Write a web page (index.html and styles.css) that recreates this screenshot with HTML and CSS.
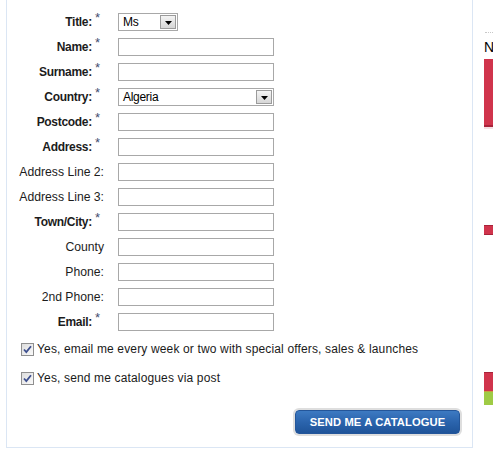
FILE: index.html
```html
<!DOCTYPE html>
<html>
<head>
<meta charset="utf-8">
<link rel="stylesheet" href="styles.css">
</head>
<body>
<div class="page">
  <div class="panel">
    <div class="form">
      <div class="label bold">Title:<span class="req">*</span></div>
      <div class="select small"><span class="val">Ms</span><span class="arrow"><svg width="7" height="4" viewBox="0 0 7 4"><path d="M0 0H7L3.5 4Z" fill="#000"/></svg></span></div>

      <div class="label bold">Name:<span class="req">*</span></div>
      <div class="input"></div>

      <div class="label bold">Surname:<span class="req">*</span></div>
      <div class="input"></div>

      <div class="label bold">Country:<span class="req">*</span></div>
      <div class="select"><span class="val">Algeria</span><span class="arrow"><svg width="7" height="4" viewBox="0 0 7 4"><path d="M0 0H7L3.5 4Z" fill="#000"/></svg></span></div>

      <div class="label bold">Postcode:<span class="req">*</span></div>
      <div class="input"></div>

      <div class="label bold">Address:<span class="req">*</span></div>
      <div class="input"></div>

      <div class="label">Address Line 2:</div>
      <div class="input"></div>

      <div class="label">Address Line 3:</div>
      <div class="input"></div>

      <div class="label bold">Town/City:<span class="req">*</span></div>
      <div class="input"></div>

      <div class="label">County</div>
      <div class="input"></div>

      <div class="label">Phone:</div>
      <div class="input"></div>

      <div class="label">2nd Phone:</div>
      <div class="input"></div>

      <div class="label bold">Email:<span class="req">*</span></div>
      <div class="input"></div>
    </div>

    <div class="checks">
      <div class="check"><span class="box"><svg width="13" height="13" viewBox="0 0 13 13"><defs><linearGradient id="g1" x1="0" y1="0" x2="1" y2="1"><stop offset="0" stop-color="#dcdcdc"/><stop offset="1" stop-color="#fbfbfb"/></linearGradient></defs><rect x="0.5" y="0.5" width="12" height="12" fill="url(#g1)" stroke="#8f8f8f"/><path d="M3 6.5L5.3 9L10 3.2" fill="none" stroke="#3d4f8e" stroke-width="1.8"/></svg></span>Yes, email me every week or two with special offers, sales &amp; launches</div>
      <div class="check"><span class="box"><svg width="13" height="13" viewBox="0 0 13 13"><rect x="0.5" y="0.5" width="12" height="12" fill="url(#g1)" stroke="#8f8f8f"/><path d="M3 6.5L5.3 9L10 3.2" fill="none" stroke="#3d4f8e" stroke-width="1.8"/></svg></span>Yes, send me catalogues via post</div>
    </div>

    <div class="actions">
      <button class="btn">SEND ME A CATALOGUE</button>
    </div>
  </div>

  <div class="side">
    <div class="dots"></div>
    <div class="side-title">N</div>
    <div class="bar bar-big"></div>
    <div class="bar bar-small"></div>
    <div class="bar bar-red"></div>
    <div class="bar bar-green"></div>
  </div>
</div>
</body>
</html>
```
FILE: styles.css
```css
* { box-sizing: border-box; }
html, body { margin: 0; padding: 0; background: #fff; }
body {
  font-family: "Liberation Sans", Arial, sans-serif;
  font-size: 12px;
  color: #1a1a1a;
  overflow: hidden;
}
.page {
  display: flex;
  align-items: flex-start;
  padding-left: 6px;
}
.panel {
  width: 467px;
  height: 448px;
  border: 1px solid #dbe6f4;
  border-top: none;
  padding-top: 13px;
  flex: none;
}
.form {
  display: grid;
  grid-template-columns: 97px 156px;
  column-gap: 14px;
  row-gap: 7px;
  grid-auto-rows: 18px;
}
.label {
  text-align: right;
  line-height: 18px;
  white-space: nowrap;
  color: #1c1c1c;
  font-size: 12.2px;
}
.label.bold {
  font-weight: bold;
  font-size: 12px;
  letter-spacing: -0.3px;
  padding-right: 4px;
}
.req {
  font-weight: normal;
  color: #3f4d70;
  font-size: 13px;
  position: relative;
  top: -4px;
  margin-left: 3px;
  letter-spacing: 0;
}
.input {
  border: 1px solid #a8a8a8;
  background: #fff;
  height: 18px;
}
.select {
  border: 1px solid #a8a8a8;
  background: #fff;
  height: 18px;
  display: flex;
  align-items: center;
  justify-content: space-between;
  padding: 0 1px 0 4px;
}
.select.small { width: 60px; }
.val {
  font-size: 12px;
  letter-spacing: -0.3px;
  color: #000;
}
.arrow {
  width: 16px;
  height: 14px;
  border: 1px solid #9b9b9b;
  background: linear-gradient(#f4f4f4, #d6d6d6);
  display: flex;
  align-items: center;
  justify-content: center;
  padding-top: 2px;
}
.arrow svg { display: block; }
.checks {
  margin-top: 10px;
  padding-left: 14px;
  display: flex;
  flex-direction: column;
  gap: 13px;
}
.check {
  display: flex;
  align-items: center;
  font-size: 12px;
  letter-spacing: 0.15px;
  line-height: 16px;
  color: #1a1a1a;
  white-space: nowrap;
}
.box {
  width: 13px;
  height: 13px;
  margin-right: 3px;
  flex: none;
}
.box svg { display: block; }
.actions {
  display: flex;
  justify-content: flex-end;
  padding-right: 12px;
  margin-top: 24px;
}
.btn {
  width: 165px;
  height: 24px;
  border: 1px solid #24569a;
  border-radius: 4px;
  background: linear-gradient(#3d7ac2, #2b64ad 50%, #1f5499);
  box-shadow: 0 0 0 2px #dedede;
  color: #fff;
  font-family: "Liberation Sans", Arial, sans-serif;
  font-weight: bold;
  font-size: 11.2px;
  letter-spacing: 0.1px;
  padding: 0;
}
.side {
  margin-left: 11px;
  width: 9px;
  flex: none;
  padding-top: 32px;
}
.dots {
  border-top: 1px dotted #c8c8c8;
  height: 1px;
  margin-left: 1px;
}
.side-title {
  font-size: 14px;
  line-height: 18px;
  color: #000;
  margin-top: 5px;
  white-space: nowrap;
}
.bar { background: #d0344c; }
.bar-big {
  height: 68px;
  margin-top: 3px;
  border-bottom: 2px solid #a8233a;
  box-shadow: 0 2px 0 #f5dfe3;
}
.bar-small {
  height: 10px;
  margin-top: 98px;
  border-top: 1px solid #a8233a;
  border-bottom: 1px solid #a8233a;
}
.bar-red {
  height: 19px;
  margin-top: 137px;
  border-top: 1px solid #a8233a;
}
.bar-green {
  height: 14px;
  background: #9fcb45;
  border-top: 1px solid #c9a040;
}
```
